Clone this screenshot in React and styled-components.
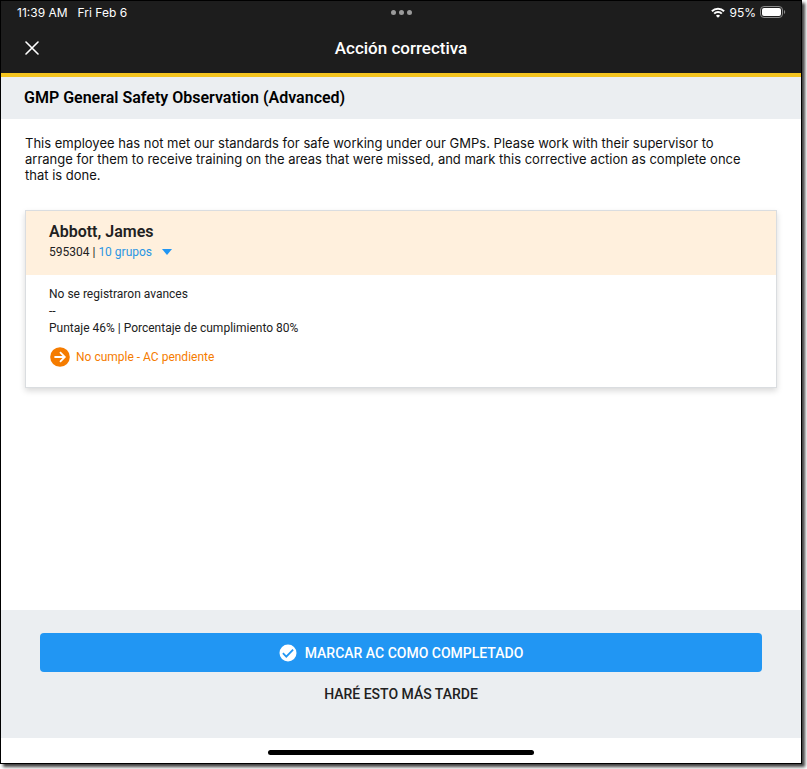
import { useState } from "react"
import styled, { createGlobalStyle } from "styled-components"

const GlobalStyle = createGlobalStyle`
    * {
        box-sizing: border-box;
    }
    body {
        margin: 0;
        background: #fff;
        font-family: Roboto, sans-serif;
        color: #212121;
    }
    h1, h2, h3, p {
        margin: 0;
    }
    button {
        font-family: inherit;
        border: none;
        padding: 0;
        cursor: pointer;
    }
`

const CloseIcon = () => (
    <svg width="14" height="14" viewBox="0 0 14 14" fill="none" stroke="#fff" strokeWidth="1.6" strokeLinecap="round">
        <path d="M1 1l12 12M13 1L1 13" />
    </svg>
)

const WifiIcon = () => (
    <svg width="14" height="11" viewBox="0 0 14 11" fill="none" stroke="#fff" strokeWidth="2">
        <path d="M0.9 4.2a8.7 8.7 0 0 1 12.2 0" />
        <path d="M3.2 6.6a5.4 5.4 0 0 1 7.6 0" />
        <path d="M7 10.8L4.9 8.7a3 3 0 0 1 4.2 0z" fill="#fff" stroke="none" />
    </svg>
)

const BatteryIcon = () => (
    <svg width="26" height="12" viewBox="0 0 26 12">
        <rect x="0.5" y="0.5" width="22" height="11" rx="3.5" fill="none" stroke="#8a8a8a" />
        <rect x="2" y="2" width="19" height="8" rx="2" fill="#fff" />
        <path d="M24 4v4c1.6-.6 1.6-3.4 0-4z" fill="#8a8a8a" />
    </svg>
)

const ArrowCircleIcon = () => (
    <svg width="20" height="20" viewBox="0 0 20 20">
        <circle cx="10" cy="10" r="9.8" fill="#f57c00" />
        <path d="M4.400 10h10.400M10 5.200l4.800 4.800-4.800 4.800" fill="none" stroke="#fff" strokeWidth="1.800" />
    </svg>
)

const CheckCircleIcon = () => (
    <svg width="18" height="18" viewBox="0 0 18 18">
        <circle cx="9" cy="9" r="8.5" fill="#fff" />
        <path d="M3.900 9.200l3.400 3.400 6.800-7" fill="none" stroke="#2196f3" strokeWidth="1.800" />
    </svg>
)

const CaretIcon = () => (
    <svg width="10" height="6" viewBox="0 0 10 6">
        <path d="M0 0h10L5 6z" fill="#2196f3" />
    </svg>
)

const employee = {
    name: "Abbott, James",
    id: "595304",
    groups: "10 grupos",
    progress: "No se registraron avances",
    score: "Puntaje 46% | Porcentaje de cumplimiento 80%",
    status: "No cumple - AC pendiente",
}

const EmployeeCard = ({ name, id, groups, progress, score, status }) => {
    const [open, setOpen] = useState(false)
    return (
        <Card>
            <CardHeader>
                <Name>{name}</Name>
                <Meta>
                    <span>{id} |</span>
                    <GroupsButton aria-expanded={open} onClick={() => setOpen(!open)}>
                        {groups}
                        <CaretIcon />
                    </GroupsButton>
                </Meta>
            </CardHeader>
            <CardBody>
                <p>{progress}</p>
                <p>--</p>
                <p>{score}</p>
                <Status>
                    <ArrowCircleIcon />
                    {status}
                </Status>
            </CardBody>
        </Card>
    )
}

export default function App() {
    return (
        <Page>
            <GlobalStyle />
            <Screen>
                <Header>
                    <StatusBar>
                        <StatusGroup $gap="10px">
                            <span>11:39 AM</span>
                            <span>Fri Feb 6</span>
                        </StatusGroup>
                        <Dots>
                            <Dot />
                            <Dot />
                            <Dot />
                        </Dots>
                        <StatusGroup $gap="4px" $end>
                            <WifiIcon />
                            <span>95%</span>
                            <BatteryIcon />
                        </StatusGroup>
                    </StatusBar>
                    <NavBar>
                        <CloseButton aria-label="Cerrar">
                            <CloseIcon />
                        </CloseButton>
                        <Title>Acción correctiva</Title>
                    </NavBar>
                </Header>
                <FormName>GMP General Safety Observation (Advanced)</FormName>
                <Content>
                    <Description>
                        This employee has not met our standards for safe working under our GMPs. Please work
                        with their supervisor to arrange for them to receive training on the areas that were
                        missed, and mark this corrective action as complete once that is done.
                    </Description>
                    <EmployeeCard {...employee} />
                </Content>
                <Footer>
                    <PrimaryButton>
                        <CheckCircleIcon />
                        MARCAR AC COMO COMPLETADO
                    </PrimaryButton>
                    <TextButton>HARÉ ESTO MÁS TARDE</TextButton>
                </Footer>
                <HomeArea>
                    <HomeBar />
                </HomeArea>
            </Screen>
        </Page>
    )
}

const Page = styled.div`
    display: flex;
    min-height: 100vh;
    padding: 0 5px 5px 0;
`

const Screen = styled.div`
    display: flex;
    flex-direction: column;
    flex: 1;
    background: #fff;
    border: 1px solid #000;
    box-shadow: 3px 3px 3px rgba(0, 0, 0, 0.75);
`

const Header = styled.header`
    background: #1d1d1d;
    color: #fff;
    border-bottom: 4px solid #f4c41f;
`

const StatusBar = styled.div`
    display: grid;
    grid-template-columns: 1fr auto 1fr;
    align-items: center;
    height: 22px;
    padding: 0 15px 0 16px;
    font-family: Inter, sans-serif;
    font-size: 12px;
`

const StatusGroup = styled.div`
    display: flex;
    align-items: center;
    gap: ${(props) => props.$gap};
    justify-content: ${(props) => (props.$end ? "flex-end" : "flex-start")};
`

const Dots = styled.div`
    display: flex;
    gap: 3px;
`

const Dot = styled.span`
    width: 5px;
    height: 5px;
    border-radius: 50%;
    background: #9b9b9b;
`

const NavBar = styled.div`
    display: grid;
    grid-template-columns: 46px 1fr 46px;
    align-items: center;
    height: 50px;
    padding: 0 8px;
`

const CloseButton = styled.button`
    display: flex;
    justify-content: center;
    background: none;
`

const Title = styled.h1`
    font-size: 17px;
    font-weight: 500;
    line-height: 24px;
    text-align: center;
`

const FormName = styled.h2`
    padding: 9px 23px;
    background: #ebeef1;
    color: #000;
    font-size: 16px;
    font-weight: 600;
    line-height: 24px;
`

const Content = styled.main`
    flex: 1;
    padding: 16px 24px;
`

const Description = styled.p`
    margin-bottom: 27px;
    padding-right: 20px;
    color: #111;
    font-family: Inter, sans-serif;
    font-size: 13px;
    line-height: 16px;
`

const Card = styled.section`
    border: 1px solid #dadde0;
    box-shadow: 0 3px 6px rgba(0, 0, 0, 0.15);
`

const CardHeader = styled.div`
    padding: 10px 23px 14px;
    background: #fff0dd;
    font-size: 12px;
`

const Name = styled.h3`
    font-size: 16px;
    font-weight: 600;
    line-height: 22px;
`

const Meta = styled.div`
    display: flex;
    align-items: center;
    gap: 3px;
    line-height: 18px;
`

const GroupsButton = styled.button`
    display: flex;
    align-items: center;
    gap: 10px;
    background: none;
    color: #2b96e3;
    font-size: 12px;
    line-height: 18px;
`

const CardBody = styled.div`
    padding: 11px 23px 20px;
    font-size: 12px;
    line-height: 17px;
`

const Status = styled.div`
    display: flex;
    align-items: center;
    gap: 6px;
    margin-top: 10px;
    padding-left: 1px;
    color: #f57c00;
`

const Footer = styled.footer`
    display: flex;
    flex-direction: column;
    align-items: center;
    gap: 10px;
    padding: 23px 39px 32px;
    background: #ebeef1;
`

const PrimaryButton = styled.button`
    display: flex;
    align-items: center;
    justify-content: center;
    gap: 8px;
    width: 100%;
    height: 39px;
    border-radius: 4px;
    background: #2196f3;
    color: #fff;
    font-size: 14px;
    font-weight: 500;
`

const TextButton = styled.button`
    background: none;
    color: #212121;
    font-size: 14px;
    font-weight: 500;
    line-height: 24px;
`

const HomeArea = styled.div`
    display: flex;
    justify-content: center;
    padding: 12px 0 8px;
`

const HomeBar = styled.div`
    width: 266px;
    height: 5px;
    border-radius: 3px;
    background: #000;
`
